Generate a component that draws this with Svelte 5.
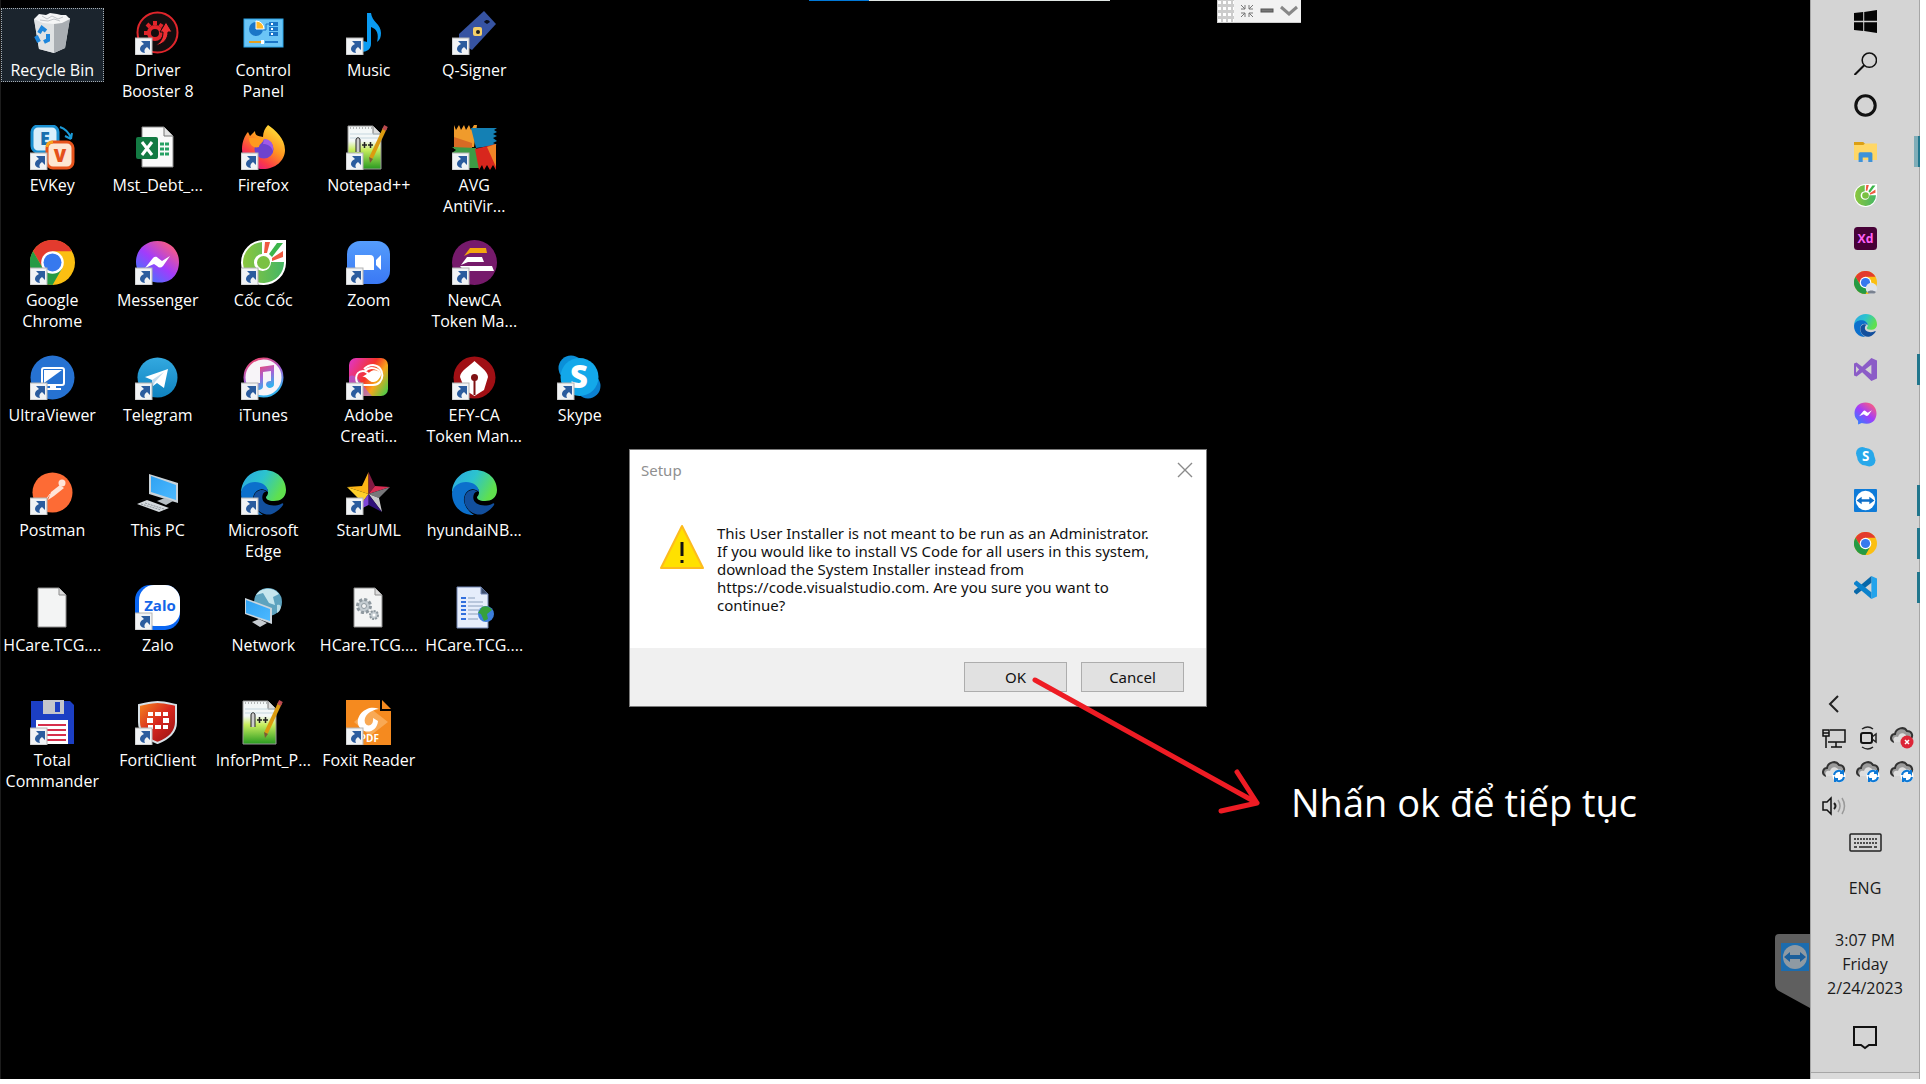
<script>
  const columns = [
    [
      { icon: 'recycle', label: ['Recycle Bin'], selected: true },
      { icon: 'evkey', label: ['EVKey'], link: true },
      { icon: 'chrome', label: ['Google', 'Chrome'], link: true },
      { icon: 'ultraviewer', label: ['UltraViewer'], link: true },
      { icon: 'postman', label: ['Postman'], link: true },
      { icon: 'file', label: ['HCare.TCG....'] },
      { icon: 'floppy', label: ['Total', 'Commander'], link: true }
    ],
    [
      { icon: 'driver', label: ['Driver', 'Booster 8'], link: true },
      { icon: 'excel', label: ['Mst_Debt_...'] },
      { icon: 'messenger', label: ['Messenger'], link: true },
      { icon: 'telegram', label: ['Telegram'], link: true },
      { icon: 'pc', label: ['This PC'] },
      { icon: 'zalo', label: ['Zalo'], link: true },
      { icon: 'forti', label: ['FortiClient'], link: true }
    ],
    [
      { icon: 'control', label: ['Control', 'Panel'] },
      { icon: 'firefox', label: ['Firefox'], link: true },
      { icon: 'coccoc', label: ['Cốc Cốc'], link: true },
      { icon: 'itunes', label: ['iTunes'], link: true },
      { icon: 'edge', label: ['Microsoft', 'Edge'], link: true },
      { icon: 'network', label: ['Network'] },
      { icon: 'notepad', label: ['InforPmt_P...'] }
    ],
    [
      { icon: 'music', label: ['Music'], link: true },
      { icon: 'notepad', label: ['Notepad++'], link: true },
      { icon: 'zoom', label: ['Zoom'], link: true },
      { icon: 'adobe', label: ['Adobe', 'Creati...'], link: true },
      { icon: 'star', label: ['StarUML'], link: true },
      { icon: 'gears', label: ['HCare.TCG....'] },
      { icon: 'foxit', label: ['Foxit Reader'], link: true }
    ],
    [
      { icon: 'qsigner', label: ['Q-Signer'], link: true },
      { icon: 'avg', label: ['AVG', 'AntiVir...'], link: true },
      { icon: 'newca', label: ['NewCA', 'Token Ma...'], link: true },
      { icon: 'efy', label: ['EFY-CA', 'Token Man...'], link: true },
      { icon: 'edge', label: ['hyundaiNB...'] },
      { icon: 'webdoc', label: ['HCare.TCG....'] }
    ],
    [null, null, null, { icon: 'skype', label: ['Skype'], link: true }]
  ];

  const system = [
    { icon: 'windows', name: 'Start' },
    { icon: 'search', name: 'Search' },
    { icon: 'cortana', name: 'Cortana' }
  ];

  const pinned = [
    { icon: 'explorer', name: 'File Explorer', state: 'multi' },
    { icon: 'coccoc', name: 'Cốc Cốc' },
    { icon: 'xd', name: 'Adobe XD' },
    { icon: 'chromeuser', name: 'Chrome profile' },
    { icon: 'edge', name: 'Edge' },
    { icon: 'vs', name: 'Visual Studio', state: 'open' },
    { icon: 'messenger', name: 'Messenger' },
    { icon: 'skype', name: 'Skype' },
    { icon: 'teamviewer', name: 'TeamViewer', state: 'open' },
    { icon: 'chrome', name: 'Chrome', state: 'open' },
    { icon: 'vscode', name: 'VS Code', state: 'open' }
  ];

  const tray = ['lan', 'camera', 'clouderror', 'cloudsync', 'cloudsync', 'cloudsync', 'speaker'];
</script>

{#snippet glyph(name)}
  {#if name === 'recycle'}
    <path d="M4 9 40 8 35 38 24 43 9 39Z" fill="#d6d9dc" />
    <path d="M24 13 40 8 35 38 24 43Z" fill="#a9aeb3" />
    <path d="M4 9 24 13 24 43 9 39Z" fill="#dfe2e4" />
    <path d="M4 9 9 4 16 5 20 3 27 4 31 5 36 5 40 9 32 13 24 14 13 13Z" fill="#f4f5f6" />
    <path d="M12 6 17 9 22 6 28 9 33 7M10 10 18 11 24 9 30 11" fill="none" stroke="#c0c4c8" />
    <g fill="none" stroke="#1d86dc" stroke-width="4"><path d="M9 23 12 18 16 21M18 24 18 30 14 32M6 26 9 32" /></g>
  {:else if name === 'evkey'}
    <rect x="2" y="1" width="26" height="26" rx="6" fill="#d9effb" stroke="#1a8fd0" stroke-width="3" />
    <text x="15" y="20" font-size="18" font-weight="900" text-anchor="middle" fill="#176fae">E</text>
    <path d="M30 2C36 4 39 8 41 13M41 14 35 11M41 14 42 8" fill="none" stroke="#1a9bd8" stroke-width="2" />
    <rect x="17" y="17" width="26" height="26" rx="6" fill="#fde6d2" stroke="#e8541c" stroke-width="3" />
    <text x="30" y="37" font-size="18" font-weight="900" text-anchor="middle" fill="#e5501a">V</text>
    <path d="M17 22C17 18 19 17 23 17" fill="none" stroke="#f7a21b" stroke-width="3" />
  {:else if name === 'chrome' || name === 'chromeuser'}
    <circle cx="22.500" cy="22.500" r="22.500" fill="#fbbf12" />
    <path d="M3 11.200A22.500 22.500 0 0 1 42 11.200L22.500 11.200 12.700 28Z" fill="#e33b2e" />
    <path d="M3 11.200A22.500 22.500 0 0 0 22.500 45L32.300 28 12.700 28Z" fill="#259a44" />
    <circle cx="22.500" cy="22.500" r="11.300" fill="#fff" />
    <circle cx="22.500" cy="22.500" r="9" fill="#3779ee" />
    {#if name === 'chromeuser'}
      <circle cx="34" cy="34" r="11" fill="#dfe3ea" />
      <path d="M26 41C30 37 38 37 43 41L40 44 28 44Z" fill="#7a8290" />
    {/if}
  {:else if name === 'ultraviewer'}
    <circle cx="22.500" cy="22.500" r="22" fill="#2672d2" />
    <rect x="12" y="13" width="22" height="17" rx="2" fill="#2672d2" stroke="#fff" stroke-width="2" />
    <path d="M14 15H32L14 28Z" fill="#fff" /><path d="M20 31H26V33H31V35H15V33H20Z" fill="#fff" />
  {:else if name === 'postman'}
    <circle cx="22.500" cy="22.500" r="20" fill="#fd6b35" />
    <circle cx="32" cy="13" r="3.500" fill="#ffe4d8" />
    <path d="M30 15 34 18 24 26 18 30 21 22Z" fill="#ffe4d8" /><path d="M20 24 15 31" stroke="#ffe4d8" />
  {:else if name === 'file'}
    <path d="M8 3H29L36 10V42H8Z" fill="#f3f4f4" stroke="#8d8d8d" /><path d="M29 3V10H36" fill="#dadada" stroke="#8d8d8d" />
  {:else if name === 'floppy'}
    <path d="M1 1H40L44 5V44H1Z" fill="#1c3fc4" />
    <path d="M13 0H34V14H13Z" fill="#c4c6cc" /><path d="M25 2H30V12H25Z" fill="#1c3fc4" />
    <path d="M6 20H38V44H6Z" fill="#fff" />
    <path d="M8 25H36M8 30H36M8 35H36M8 40H36" stroke="#d62f4b" stroke-width="2" />
  {:else if name === 'driver'}
    <circle cx="22.500" cy="22.500" r="20" fill="#130d0e" stroke="#e0252b" stroke-width="2" />
    <circle cx="20" cy="23" r="6" fill="none" stroke="#e0252b" stroke-width="4" />
    <path d="M15 17 12 14M20 15V11M13 23H9M15 29 12 31M25 17 27 14" stroke="#e0252b" stroke-width="4" />
    <path d="M20 36C29 34 33 29 33 22L37 22 31 12 25 22 28 22C28 28 26 32 20 36Z" fill="#ee3034" stroke="#130d0e" />
  {:else if name === 'excel'}
    <path d="M7 2H29L38 11V42H7Z" fill="#fafafa" stroke="#8b8b8b" /><path d="M29 2V11H38" fill="#e4e4e4" stroke="#777" />
    <path d="M25 19H34M25 24H34M25 29H34" stroke="#27a164" stroke-width="3" stroke-dasharray="4 1" />
    <rect x="1" y="12" width="22" height="22" rx="2" fill="#137a43" />
    <path d="M7 17 17 30M17 17 7 30" stroke="#fff" stroke-width="3" />
  {:else if name === 'messenger'}
    <path d="M22.500 1C10 1 1 10 1 22 1 29 4 33 8 37V44L15 41C36 47 44 34 44 22 44 10 35 1 22.500 1Z" fill="url(#g-messenger)" />
    <path d="M10 28 18 18C20 16 22 17 23 18L27 21 35 16 28 26C26 28 24 28 22 26L19 24Z" fill="#fff" />
  {:else if name === 'telegram'}
    <circle cx="22.500" cy="22.500" r="20" fill="url(#g-telegram)" />
    <path d="M10 22 33 14 29 33 22 28 18 31 17 25Z" fill="#fff" /><path d="M17 25 29 17 20 27 18 31Z" fill="#c3dced" />
  {:else if name === 'pc'}
    <path d="M14 4 43 13V33L14 24Z" fill="#c9d2d8" /><path d="M16 6 41 15V30L16 22Z" fill="url(#g-screen)" />
    <path d="M22 31 30 28 38 31 31 35Z" fill="#b6bec4" />
    <path d="M2 34 12 30 34 38 24 42Z" fill="#d5dade" /><path d="M6 34 26 40M10 33 29 39" stroke="#8f979d" stroke-dasharray="2 1" />
  {:else if name === 'zalo'}
    <rect x="0" y="0" width="45" height="45" rx="15" fill="#0a66f2" />
    <rect x="4" y="0" width="41" height="41" rx="15" fill="#fff" />
    <text x="25" y="26" font-size="15" font-weight="700" text-anchor="middle" fill="#1565e8">Zalo</text>
  {:else if name === 'forti'}
    <path d="M22.500 2C30 2 36 4 41 5V22C41 33 33 39 22.500 43 12 39 4 33 4 22V5C10 4 16 2 22.500 2Z" fill="url(#g-forti)" stroke="#d7e0e6" stroke-width="2" />
    <g fill="#fff"><rect x="13" y="12" width="5" height="4" /><rect x="20" y="12" width="6" height="4" /><rect x="28" y="12" width="5" height="4" /><rect x="12" y="18" width="6" height="5" /><rect x="28" y="18" width="6" height="5" /><rect x="13" y="25" width="5" height="4" /><rect x="20" y="25" width="6" height="4" /><rect x="28" y="25" width="5" height="4" /></g>
  {:else if name === 'control'}
    <rect x="3" y="9" width="39" height="28" fill="#6bc5f6" stroke="#2ba4e8" />
    <circle cx="15" cy="19" r="7" fill="#1a75c7" /><path d="M15 19V11A8 8 0 0 1 23 19Z" fill="#ffb929" stroke="#fff" />
    <path d="M22 20H25V14H28" fill="none" stroke="#1a75c7" />
    <path d="M28 14H37M28 19H37M28 24H37" stroke="#1a75c7" stroke-width="4" /><path d="M30 14H32M30 19H32M30 24H32" stroke="#fff" stroke-width="2" />
    <path d="M8 32H20" stroke="#e6a01e" stroke-width="2" /><path d="M24 32H37" stroke="#1a75c7" stroke-width="2" /><rect x="20" y="30" width="3" height="4" fill="#fff" />
  {:else if name === 'firefox'}
    <path d="M27 0C34 5 44 13 44 25 44 36 34 44 22 44 10 44 1 35 1 24 1 17 4 10 7 7L9 11 14 6C14 10 16 11 22 12 22 7 24 3 27 0Z" fill="url(#g-firefox)" />
    <circle cx="23" cy="24" r="9.500" fill="#6d43cf" />
    <path d="M8 13C13 12 16 14 23 14 22 18 18 19 18 22 12 24 8 19 8 13Z" fill="#ff9a1f" /><path d="M23 14C31 14 33 21 32 26 30 21 27 19 22 19Z" fill="#a05be8" />
  {:else if name === 'coccoc'}
    <path d="M22.500 0H45V22A22.500 22.500 0 1 1 22.500 0Z" fill="#fff" />
    <path d="M21 2A20.500 20.500 0 1 0 43 22L30 22A8.500 8.500 0 1 1 21 14Z" fill="url(#g-coccoc)" />
    <circle cx="22.500" cy="22.500" r="6.500" fill="#7ac142" />
    <path d="M24 2H29L26 13 23 13Z" fill="#ee5a40" /><path d="M36 3 42 3 31 17 28 14Z" fill="#3bb54a" /><path d="M42 11 42 17 31 21 31 18Z" fill="#ee5a40" />
  {:else if name === 'itunes'}
    <circle cx="22.500" cy="22.500" r="19" fill="#f7f4f8" stroke="url(#g-itunes)" stroke-width="2" />
    <path d="M19 12 33 10V29A4 3.500 0 1 1 30 26V16L22 17V31A4 3.500 0 1 1 19 28Z" fill="url(#g-itunes)" />
  {:else if name === 'edge'}
    <path d="M0 23C0 10 10 0 23 0 36 0 45 9 45 20 45 28 39 31 33 31 27 31 25 29 25 27 27 25 27 23 27 22 27 18 23 15 18 14 9 14 1 18 0 23Z" fill="url(#g-edgetop)" />
    <path d="M0 23C1 16 7 12 14 12 21 12 27 16 27 22 20 15 11 22 12 31 13 37 17 42 22 45 9 45 0 36 0 23Z" fill="#0c70cc" />
    <path d="M27 22C16 15 9 27 14 36 17 42 24 46 31 44 36 42 40 38 42 35 43 33 41 33 40 34 31 38 18 34 22 24 23 22 25 21 27 22Z" fill="#124f9d" />
  {:else if name === 'network'}
    <circle cx="27" cy="17" r="14" fill="#5da3bf" /><path d="M15 10C20 2 33 2 38 9L32 12 34 20 28 18 22 8Z" fill="#c5e6ee" /><path d="M36 20C41 18 41 25 36 28Z" fill="#b7dde8" />
    <path d="M4 13 31 23V39L4 29Z" fill="#cbd5dc" /><path d="M5 15 29 24V36L5 28Z" fill="url(#g-screen)" /><path d="M11 37 18 34 26 38 19 42Z" fill="#c6ccd1" />
  {:else if name === 'notepad'}
    <path d="M2 1H27L35 9V44H2Z" fill="url(#g-note)" stroke="#999" /><path d="M27 1V9H35" fill="#ddd" stroke="#777" />
    <path d="M4 3H26" stroke="#777" stroke-dasharray="1 2" /><path d="M4 9H33M4 13H33" stroke="#c5d6de" />
    <path d="M10 27V15C10 12 14 12 14 15V27" fill="#ccc" stroke="#222" stroke-width="1" />
    <path d="M16 20H21M18.500 17V23M22 20H27M24.500 17V23" stroke="#222" stroke-width="1.500" />
    <path d="M39 3 25 33" stroke="#dc9b0f" stroke-width="4" /><path d="M40 1 38 5" stroke="#bb4a50" stroke-width="4" /><path d="M23 32 27 34 24 38Z" fill="#7e5a33" />
  {:else if name === 'music'}
    <path d="M21 3H25C26 12 35 14 35 23 35 27 34 30 31 32 33 24 31 19 25 17V34C25 39 21 42 15 42 10 42 9 34 14 32 17 31 19 31 21 32Z" fill="#0a9bf2" />
  {:else if name === 'zoom'}
    <rect x="1" y="1" width="43" height="43" rx="13" fill="url(#g-zoom)" />
    <path d="M9 15H24C27 15 28 17 28 19V30H13C10 30 9 28 9 26ZM30 20 35 15V30L30 25Z" fill="#fff" />
  {:else if name === 'adobe'}
    <rect x="3" y="3" width="39" height="38" rx="7" fill="url(#g-adobe)" />
    <path d="M3 22C10 16 15 30 26 41H10Q3 41 3 34Z" fill="#9c62ed" opacity=".6" />
    <path d="M16 30C8 30 8 16 17 16 20 16 22 18 26 22 29 25 34 23 34 19 34 13 24 11 19 16M16 30H27C39 30 40 11 27 10 23 10 20 12 18 14" fill="none" stroke="#fff" stroke-width="2" />
    <path d="M16 22C20 20 23 28 28 27 33 26 34 22 34 19 33 15 27 14 24 17Z" fill="#fff" />
  {:else if name === 'star'}
    <path d="M22.500 2 16 16 1 17 22.500 24Z" fill="#fdb515" /><path d="M1 17 12 28 9 43 22.500 24Z" fill="#ffd02b" />
    <path d="M22.500 2 29 16 22.500 24Z" fill="#821a43" /><path d="M29 16 44 17 22.500 24Z" fill="#da2c53" />
    <path d="M44 17 33 28 22.500 24Z" fill="#77777a" /><path d="M33 28 36 42 22.500 24Z" fill="#c9c9cb" />
    <path d="M22.500 24 36 42 22.500 35Z" fill="#30107a" /><path d="M22.500 24V35L9 42Z" fill="#7f45d6" />
  {:else if name === 'gears'}
    <path d="M8 3H29L36 10V42H8Z" fill="#f3f4f4" stroke="#8d8d8d" /><path d="M29 3V10H36" fill="#dadada" stroke="#8d8d8d" />
    <circle cx="18" cy="21" r="6.500" fill="#c4ccd1" stroke="#8e989f" stroke-width="3" stroke-dasharray="3 2" /><circle cx="18" cy="21" r="2.500" fill="#f3f4f4" stroke="#8e989f" />
    <circle cx="28" cy="30" r="4" fill="#c4ccd1" stroke="#8e989f" stroke-width="2" stroke-dasharray="2 1" /><circle cx="28" cy="30" r="1.500" fill="#fff" />
  {:else if name === 'foxit'}
    <path d="M0 0H34V11H45V45H0Z" fill="#f58a1f" /><path d="M36 0 45 9H36Z" fill="#f58a1f" />
    <path d="M24 8 42 22 24 36 8 22Z" fill="#f9a954" />
    <path d="M33 9C22 4 10 14 12 24 15 35 31 34 32 21L27 18C28 25 22 28 19 23 17 16 24 10 33 9Z" fill="#fff" />
    <text x="33" y="42" font-size="10" font-weight="700" text-anchor="end" fill="#fff">PDF</text>
  {:else if name === 'qsigner'}
    <path d="M32 1 44 14 20 40 7 32V24Z" fill="#3653a2" /><path d="M32 12C34 9 37 10 38 12L35 14Z" fill="#0b0f1e" />
    <rect x="21" y="17" width="9" height="9" rx="2" fill="#f4cf68" /><circle cx="26" cy="22" r="2" fill="#222" />
  {:else if name === 'avg'}
    <path d="M2 0 4 5 7 0 9 5 12 0 14 5 17 0 19 5 22 0 25 0 22 22H2Z" fill="#f09b2c" /><path d="M2 12 20 18V24H2Z" fill="#d86b25" />
    <path d="M19 3H45L42 5 45 7 41 9 45 11 41 13 45 16 41 18 45 20 24 23Z" fill="#1480b4" />
    <path d="M0 22 24 23 28 43H2L4 38 0 36 4 31 0 28 4 25Z" fill="#3d9b45" />
    <path d="M23 24 44 19V45L41 40 38 45 35 40 32 45 30 40 27 45Z" fill="#d8261d" /><path d="M35 22 44 19V42Z" fill="#f08426" />
  {:else if name === 'newca'}
    <circle cx="22.500" cy="22.500" r="22.500" fill="#761a6b" />
    <path d="M12 16 18 8H34L35 13H18Z" fill="#f3a60e" /><path d="M9 25 15 17H30L32 22H16Z" fill="#fff" /><path d="M8 26H40L42 31H12Z" fill="#fff" />
  {:else if name === 'efy'}
    <circle cx="22.500" cy="22.500" r="21" fill="#a00f14" /><path d="M22.500 6C26 10 36 16 36 22L32 35 22.500 41 13 35 8 22C8 16 19 10 22.500 6Z" fill="#fff" />
    <circle cx="22.500" cy="22.500" r="3.500" fill="#7f1113" /><path d="M22.500 23V40" stroke="#7f1113" stroke-width="2" />
  {:else if name === 'webdoc'}
    <path d="M5 2H29L36 9V43H5Z" fill="#e5edfb" stroke="#7185b3" /><path d="M29 2V9H36" fill="#3f5070" stroke="#7185b3" />
    <path d="M9 13H14M9 17H14M9 21H14M9 25H14M9 29H14M9 34H14" stroke="#3270dd" stroke-width="2" /><path d="M16 13H23M16 17H31M16 21H31M16 25H27M16 29H26M16 34H26" stroke="#8ba0bd" />
    <circle cx="34" cy="29" r="8" fill="#3c7edb" /><path d="M30 22C35 20 39 23 40 25L35 29 36 34 32 36 29 29 26 28Z" fill="#36a13c" />
  {:else if name === 'skype'}
    <circle cx="14" cy="13" r="12.500" fill="#0b8fd8" /><circle cx="31" cy="31" r="12.500" fill="#0b80d0" /><circle cx="22.500" cy="22" r="19" fill="#13a8ea" />
    <text x="22" y="33" font-size="31" font-weight="800" text-anchor="middle" fill="#fff">S</text>
  {:else if name === 'skypeflat'}
    <circle cx="16" cy="16" r="12" fill="#28a8ea" /><circle cx="30" cy="30" r="12" fill="#28a8ea" /><circle cx="23" cy="23" r="17" fill="#28a8ea" />
    <text x="23" y="32" font-size="26" font-weight="700" text-anchor="middle" fill="#fff">S</text>
  {:else if name === 'windows'}
    <path d="M0 6 18 4V21H0ZM20 4 45 0V21H20ZM0 24H18V41L0 39ZM20 24H45V45L20 41Z" fill="#050505" />
  {:else if name === 'search'}
    <circle cx="30" cy="16" r="14" fill="none" stroke="#111" stroke-width="3" /><path d="M20 26 1 45" stroke="#111" stroke-width="4" />
  {:else if name === 'cortana'}
    <circle cx="22.500" cy="22.500" r="19" fill="none" stroke="#111" stroke-width="6" />
  {:else if name === 'explorer'}
    <path d="M0 4H18L22 8V14H0Z" fill="#dc9f13" /><path d="M0 10H18L22 7H45V39H0Z" fill="#ffd766" />
    <path d="M9 43V27Q9 24 12 24H33Q36 24 36 27V43H28V34H17V43Z" fill="#3d92d8" />
  {:else if name === 'xd'}
    <rect x="0" y="0" width="45" height="45" rx="7" fill="#470137" />
    <text x="22.500" y="31" font-size="24" font-weight="700" text-anchor="middle" fill="#ff61f6">Xd</text>
  {:else if name === 'vs'}
    <path d="M34 0 45 5V40L34 45 16 28 5 36 0 34V11L5 9 16 17ZM34 13 22 22.500 34 32ZM4 16V29L10 22.500Z" fill="#8b5cc7" fill-rule="evenodd" />
  {:else if name === 'vscode'}
    <path d="M34 0 45 5V40L34 45Z" fill="#24a4ec" /><path d="M34 0V13L5 36 0 32V29Z" fill="#0868a9" /><path d="M34 45V32L5 9 0 13V16Z" fill="#0b82cc" />
  {:else if name === 'teamviewer'}
    <rect x="0" y="0" width="45" height="45" rx="2" fill="#0e7bd8" /><circle cx="22.500" cy="22.500" r="19" fill="#fff" />
    <path d="M5 22.500 15 15V20H30V15L40 22.500 30 30V25H15V30Z" fill="#0e6fc8" />
  {/if}
{/snippet}

{#snippet cloud()}
  <path d="M4 16C-1 14 1 8 5 8 6 2 14 0 17 5 22 5 24 10 20 14" fill="#9b9b9b" stroke="#333" stroke-width="2" />
  <path d="M4 16C2 11 6 10 8 11 9 7 13 6 16 9L15 16Z" fill="#dedede" />
{/snippet}

<svg class="defs" width="0" height="0" aria-hidden="true">
  <defs>
    <linearGradient id="g-messenger" x1="0" y1="1" x2=".8" y2="0"><stop offset="0" stop-color="#1a8dff" /><stop offset=".55" stop-color="#a23cfb" /><stop offset="1" stop-color="#ff5f7a" /></linearGradient>
    <linearGradient id="g-telegram" x1="0" y1="0" x2="0" y2="1"><stop offset="0" stop-color="#33a9e0" /><stop offset="1" stop-color="#0f82bf" /></linearGradient>
    <linearGradient id="g-screen" x1="0" y1="0" x2="1" y2="1"><stop offset="0" stop-color="#2fa2f2" /><stop offset="1" stop-color="#4db9ff" /></linearGradient>
    <linearGradient id="g-forti" x1="0" y1="0" x2="1" y2="1"><stop offset="0" stop-color="#f5891f" /><stop offset=".5" stop-color="#d7261e" /><stop offset="1" stop-color="#8f0f12" /></linearGradient>
    <linearGradient id="g-firefox" x1="1" y1="0" x2=".3" y2="1"><stop offset=".1" stop-color="#ffe53b" /><stop offset=".5" stop-color="#ff9620" /><stop offset=".8" stop-color="#fb3a48" /><stop offset="1" stop-color="#e31587" /></linearGradient>
    <linearGradient id="g-coccoc" x1="0" y1="0" x2="1" y2="0"><stop offset="0" stop-color="#8bc63e" /><stop offset="1" stop-color="#45b664" /></linearGradient>
    <linearGradient id="g-itunes" x1="0" y1="0" x2=".4" y2="1"><stop offset="0" stop-color="#f8415f" /><stop offset=".55" stop-color="#a463d8" /><stop offset="1" stop-color="#35b1ee" /></linearGradient>
    <linearGradient id="g-edgetop" x1="0" y1="0" x2="1" y2=".4"><stop offset="0" stop-color="#2aa6e4" /><stop offset=".5" stop-color="#2cc3cf" /><stop offset="1" stop-color="#5fe04e" /></linearGradient>
    <linearGradient id="g-note" x1="0" y1="0" x2="0" y2="1"><stop offset=".35" stop-color="#f4f8f8" /><stop offset=".55" stop-color="#c9ee5e" /><stop offset="1" stop-color="#279a20" /></linearGradient>
    <linearGradient id="g-zoom" x1="0" y1="0" x2="0" y2="1"><stop offset="0" stop-color="#559dfc" /><stop offset="1" stop-color="#3a78f4" /></linearGradient>
    <linearGradient id="g-adobe" x1="0" y1=".2" x2="1" y2=".8"><stop offset="0" stop-color="#e335b4" /><stop offset=".45" stop-color="#f5342c" /><stop offset=".7" stop-color="#f9a51b" /><stop offset="1" stop-color="#5ac845" /></linearGradient>
  </defs>
</svg>

<div class="screen">
  <main class="desktop">
    <div class="shortcuts">
      {#each columns as column}
        <div class="column">
          {#each column as item}
            {#if item}
              <button class="shortcut" class:selected={item.selected}>
                <svg class="picture" viewBox="0 0 45 45" aria-hidden="true">
                  {@render glyph(item.icon)}
                  {#if item.link}
                    <rect x="0" y="28" width="17" height="17" fill="#f1f3f5" stroke="#b3b3b3" />
                    <path d="M6 31H15V40L12 37C9 39 9 41 10 43 3 42 4 36 9 34Z" fill="#2b5c9e" />
                  {/if}
                </svg>
                <span class="label">
                  {#each item.label as line}<span>{line}</span>{/each}
                </span>
              </button>
            {:else}
              <div class="empty"></div>
            {/if}
          {/each}
        </div>
      {/each}
    </div>

    <div class="progress"></div>

    <div class="handle">
      <span class="grip"></span>
      <button aria-label="Collapse">
        <svg width="14" height="14" viewBox="0 0 14 14"><path d="M1 1 5 5M5 1V5H1M13 1 9 5M9 1V5H13M1 13 5 9M5 13V9H1M13 13 9 9M9 13V9H13" fill="none" stroke="#777" /></svg>
      </button>
      <button aria-label="Minimize">
        <svg width="14" height="14" viewBox="0 0 14 14"><rect x="1" y="5" width="12" height="3" fill="#777" stroke="#555" /></svg>
      </button>
      <button aria-label="Expand">
        <svg width="18" height="14" viewBox="0 0 18 14"><path d="M1 3 9 10 17 3" fill="none" stroke="#888" stroke-width="3" /></svg>
      </button>
    </div>

    <div class="dialog" role="dialog" aria-labelledby="dialog-title">
      <header>
        <h1 id="dialog-title">Setup</h1>
        <button class="close" aria-label="Close">
          <svg width="16" height="16" viewBox="0 0 16 16"><path d="M1 1 15 15M15 1 1 15" stroke="#8a8a8a" stroke-width="1.400" /></svg>
        </button>
      </header>
      <div class="message">
        <svg width="46" height="46" viewBox="0 0 46 46" aria-hidden="true">
          <path d="M23 2 44 44H2Z" fill="#ffe100" stroke="#fdbb1e" stroke-width="2" stroke-linejoin="round" />
          <path d="M23 18V32M23 36V39" stroke="#111" stroke-width="3" />
        </svg>
        <p>
          This User Installer is not meant to be run as an Administrator.<br />
          If you would like to install VS Code for all users in this system,<br />
          download the System Installer instead from<br />
          https://code.visualstudio.com. Are you sure you want to<br />
          continue?
        </p>
      </div>
      <footer>
        <button>OK</button>
        <button>Cancel</button>
      </footer>
    </div>

    <div class="note">
      <svg width="230" height="140" viewBox="0 0 230 140" aria-hidden="true">
        <path d="M4 4 226 127M206 96 226 127 190 135" fill="none" stroke="#ee1c24" stroke-width="5" stroke-linecap="round" stroke-linejoin="round" />
      </svg>
      <p>Nhấn ok để tiếp tục</p>
    </div>

    <button class="viewer-tab" aria-label="TeamViewer panel">
      <svg width="35" height="74" viewBox="0 0 35 74">
        <path d="M4 0H35V74L4 57Q0 55 0 49V4Q0 0 4 0Z" fill="#5f5f5f" />
        <rect x="6" y="9" width="28" height="28" fill="#1c6cae" /><circle cx="20" cy="23" r="12" fill="#8f9aa3" />
        <path d="M9 23 15 18V21H25V18L31 23 25 28V25H15V28Z" fill="#1c5f9b" />
      </svg>
    </button>
  </main>

  <aside class="taskbar">
    <nav class="system" aria-label="System">
      {#each system as item}
        <button aria-label={item.name}><svg viewBox="0 0 45 45">{@render glyph(item.icon)}</svg></button>
      {/each}
    </nav>
    <nav class="pinned" aria-label="Applications">
      {#each pinned as item}
        <button class={item.state} aria-label={item.name}>
          <svg viewBox="0 0 45 45">{@render glyph(item.icon === 'skype' ? 'skypeflat' : item.icon)}</svg>
        </button>
      {/each}
    </nav>

    <div class="status">
      <button class="more" aria-label="Show hidden icons">
        <svg width="24" height="24" viewBox="0 0 24 24"><path d="M16 4 8 12 16 20" fill="none" stroke="#222" stroke-width="2" /></svg>
      </button>
      <div class="tray">
        {#each tray as name}
          <button aria-label={name}>
            <svg width="24" height="24" viewBox="0 0 24 24">
              {#if name === 'lan'}
                <path d="M8 4H23V16H6M14 16V21M9 21H20M1 4H7V10H1ZM4 10V22M1 7H7" fill="none" stroke="#111" stroke-width="1.500" />
              {:else if name === 'camera'}
                <rect x="5" y="7" width="11" height="10" rx="2" fill="none" stroke="#111" stroke-width="2" />
                <path d="M16 11 20 8V16L16 13M6 3Q12 -1 17 3M6 21Q12 25 17 21" fill="none" stroke="#222" stroke-width="1.500" />
              {:else if name === 'clouderror'}
                {@render cloud()}
                <circle cx="17" cy="16" r="6.500" fill="#dc2537" /><path d="M15 14 19 18M19 14 15 18" stroke="#fff" stroke-width="1.500" />
              {:else if name === 'cloudsync'}
                {@render cloud()}
                <circle cx="17" cy="16" r="6.500" fill="#fff" /><path d="M12 15A5 5 0 0 1 21 13V10M21 13H18M22 17A5 5 0 0 1 13 19V22M13 19H16" fill="none" stroke="#0b78d6" stroke-width="2" />
              {:else}
                <path d="M1 8H5L9 4V20L5 16H1Z" fill="none" stroke="#111" stroke-width="1.500" /><path d="M12 9Q15 12 12 15" fill="none" stroke="#222" stroke-width="2" /><path d="M16 6Q20 12 16 18M20 4Q25 12 20 20" fill="none" stroke="#999" stroke-width="1.500" />
              {/if}
            </svg>
          </button>
        {/each}
      </div>
      <button class="keyboard" aria-label="Touch keyboard">
        <svg width="33" height="19" viewBox="0 0 33 19"><rect x="1" y="1" width="31" height="17" rx="1" fill="none" stroke="#222" stroke-width="1.500" /><path d="M5 6H28M5 10H28" stroke="#222" stroke-width="1.500" stroke-dasharray="2 1" /><path d="M5 14H8M10 14H23M25 14H28" stroke="#222" stroke-width="1.500" /></svg>
      </button>
      <button class="language">ENG</button>
      <button class="clock"><span>3:07 PM</span><span>Friday</span><span>2/24/2023</span></button>
      <button class="notifications" aria-label="Notifications">
        <svg width="24" height="24" viewBox="0 0 24 24"><path d="M1 1H23V19H16L12 22 8 19H1Z" fill="none" stroke="#111" stroke-width="2" /></svg>
      </button>
    </div>
    <div class="show-desktop"></div>
  </aside>
</div>

<style>
  :global(body) {
    margin: 0;
    background: #fff;
    font-family: "Open Sans", "Noto Sans", sans-serif;
  }
  button {
    margin: 0;
    padding: 0;
    border: 0;
    background: none;
    color: inherit;
    font: inherit;
  }
  svg {
    display: block;
  }
  .defs {
    position: absolute;
  }
  .screen {
    display: flex;
    box-sizing: border-box;
    height: 100vh;
    padding: 0 6px 5px 0;
  }
  .desktop {
    position: relative;
    flex: 1;
    overflow: hidden;
    border-left: 1px solid #1c1c1c;
    background: #000;
  }
  .shortcuts {
    display: grid;
    grid-template-columns: repeat(6, 1fr);
    gap: 3px;
    width: 630px;
    padding-top: 8px;
  }
  .column {
    display: grid;
    grid-auto-rows: 115px;
    align-content: start;
  }
  .shortcut {
    display: flex;
    flex-direction: column;
    align-items: center;
    align-self: start;
    box-sizing: border-box;
    padding: 1px 0 0;
    border: 1px solid transparent;
    color: #fff;
    font-size: 16px;
    line-height: 21px;
  }
  .selected {
    border: 1px dotted #a5adb3;
    background: #1b242d;
  }
  .picture {
    width: 45px;
    height: 45px;
  }
  .label {
    display: flex;
    flex-direction: column;
    padding-top: 5px;
    white-space: nowrap;
  }
  .progress {
    position: absolute;
    top: 0;
    left: 808px;
    width: 301px;
    height: 1px;
    background: linear-gradient(to right, #0078d7 20%, #e0e6e4 20%);
  }
  .handle {
    position: absolute;
    top: 0;
    left: 1216px;
    display: flex;
    align-items: center;
    gap: 6px;
    height: 22px;
    padding-right: 3px;
    border-bottom: 1px solid #ccc;
    background: #f2f2f2;
  }
  .grip {
    align-self: stretch;
    width: 17px;
    background: conic-gradient(from 0deg at 3px 3px, #ccc 270deg, #fff 0) 1px 1px / 5px 6px;
  }
  .dialog {
    position: absolute;
    top: 449px;
    left: 628px;
    width: 576px;
    border: 1px solid #7a7a7a;
    background: #fff;
    color: #111;
    font-family: "Noto Sans", "Open Sans", sans-serif;
    font-size: 15px;
  }
  .dialog header {
    display: flex;
    align-items: center;
    justify-content: space-between;
    padding: 0 13px 0 11px;
    height: 40px;
  }
  h1 {
    margin: 0;
    color: #909090;
    font-size: 15px;
    font-weight: 400;
  }
  .message {
    display: flex;
    gap: 12px;
    padding: 34px 29px;
  }
  .message p {
    margin: 0;
    line-height: 18px;
    white-space: nowrap;
  }
  .dialog footer {
    display: flex;
    justify-content: flex-end;
    gap: 14px;
    padding: 14px 22px;
    background: #f0f0f0;
  }
  footer button {
    box-sizing: border-box;
    width: 103px;
    height: 30px;
    border: 1px solid #adadad;
    background: #e1e1e1;
  }
  .note {
    position: absolute;
    top: 676px;
    left: 1030px;
    display: flex;
    align-items: flex-start;
    gap: 30px;
    color: #fff;
    font-size: 38px;
    line-height: 44px;
  }
  .note p {
    margin: 0;
    padding-top: 104px;
    white-space: nowrap;
  }
  .viewer-tab {
    position: absolute;
    right: 0;
    bottom: 71px;
  }
  .taskbar {
    display: flex;
    flex-direction: column;
    box-sizing: border-box;
    width: 110px;
    border: 1px solid #a6a6a6;
    border-width: 0 1px;
    background: #d4d4d4;
    color: #1a1a1a;
    font-size: 16px;
  }
  .system,
  .pinned {
    display: grid;
  }
  .system {
    grid-auto-rows: 42px;
  }
  .pinned {
    grid-auto-rows: 1fr;
    height: 479px;
    padding-top: 4px;
  }
  nav button {
    display: flex;
    align-items: center;
    justify-content: center;
    position: relative;
  }
  nav svg {
    width: 23px;
    height: 23px;
  }
  .open::after,
  .multi::after {
    content: "";
    position: absolute;
    right: -1px;
    width: 3px;
    height: 31px;
    background: #21768c;
  }
  .multi::after {
    box-sizing: border-box;
    width: 6px;
    border-left: 4px solid #7fadb8;
  }
  .status {
    display: flex;
    flex-direction: column;
    align-items: center;
    margin-top: auto;
  }
  .more {
    align-self: flex-start;
    padding: 0 11px 10px;
  }
  .tray {
    display: grid;
    grid-template-columns: repeat(3, 24px);
    gap: 10px;
    padding-left: 6px;
  }
  .keyboard {
    padding: 15px 0 20px;
  }
  .language {
    line-height: 32px;
  }
  .clock {
    display: flex;
    flex-direction: column;
    padding: 24px 0 26px;
    line-height: 24px;
    text-align: center;
  }
  .notifications {
    padding-bottom: 22px;
  }
  .show-desktop {
    height: 6px;
    border-top: 1px solid #a6a6a6;
    background: #dadada;
  }
</style>
